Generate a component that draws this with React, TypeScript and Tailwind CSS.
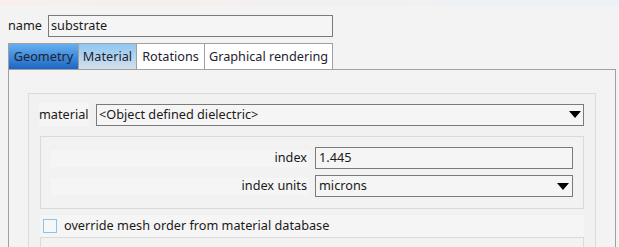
import React from "react";

function Arrow() {
  return (
    <svg width="12" height="7" viewBox="0 0 12 7" className="shrink-0">
      <polygon points="0,0 12,0 6,7" fill="#000" />
    </svg>
  );
}

function Tab({ label, kind, width }: { label: string; kind: "active" | "hover" | "plain"; width: string }) {
  const bg =
    kind === "active"
      ? "bg-gradient-to-b from-[#66b0f0] to-[#1b66c6]"
      : kind === "hover"
      ? "bg-gradient-to-b from-[#8ec6f2] to-[#d4dfea]"
      : "bg-white";
  return (
    <div
      className={`h-[27px] flex items-center justify-center border border-[#a0a0a0] -ml-px first:ml-0 text-[#1e2430] ${width} ${bg}`}
    >
      {label}
    </div>
  );
}

export default function App() {
  return (
    <div
      className="w-[619px] h-[247px] overflow-hidden bg-[#f3f3f3] text-[12.7px] text-[#1a1a1a]"
      style={{ fontFamily: '"Noto Sans", sans-serif' }}
    >
      <div className="h-[6px] bg-gradient-to-r from-[#f8efea] to-[#ebf2f7]" />

      {/* name row */}
      <div className="flex items-center mt-[9px] pl-[8px]">
        <span className="w-[40px]">name</span>
        <div className="w-[285px] h-[22px] border border-[#7a7a7a] bg-[#f5f5f5] flex items-center pl-[2px]">
          substrate
        </div>
      </div>

      {/* tabs */}
      <div className="flex mt-[6px] ml-[8px]">
        <Tab label="Geometry" kind="active" width="w-[71px]" />
        <Tab label="Material" kind="hover" width="w-[59px]" />
        <Tab label="Rotations" kind="plain" width="w-[69px]" />
        <Tab label="Graphical rendering" kind="plain" width="w-[129px]" />
      </div>

      {/* panel */}
      <div className="ml-[8px] w-[608px] h-[200px] -mt-px border border-[#a0a0a0] border-b-0 pt-[23px] px-[19px]">
        <div className="border border-[#dadada] bg-[#f1f1f1] h-[200px] pt-[9px] px-[10px]">
          <div className="flex items-center h-[23px]">
            <span className="w-[50px] h-[23px] flex items-center bg-[#f5f5f5]">material</span>
            <div className="ml-[7px] flex-1 h-[22px] border border-[#7a7a7a] bg-[#f5f5f5] flex items-center pl-[2px] pr-[2px] mr-px">
              <span className="flex-1">&lt;Object defined dielectric&gt;</span>
              <Arrow />
            </div>
          </div>

          <div className="mt-[10px] mx-[1px] border border-[#dadada] bg-[#f2f2f2] pt-[10px] pb-[11px] px-[10px] flex flex-col gap-[6px]">
            <div className="flex items-center">
              <span className="w-[258px] h-[17px] flex items-center justify-end pr-[2px] bg-[#f5f5f5]">index</span>
              <div className="ml-[6px] flex-1 h-[22px] border border-[#7a7a7a] bg-[#f5f5f5] flex items-center pl-[3px]">
                1.445
              </div>
            </div>
            <div className="flex items-center">
              <span className="w-[258px] h-[17px] flex items-center justify-end pr-[2px] bg-[#f5f5f5]">index units</span>
              <div className="ml-[6px] flex-1 h-[22px] border border-[#7a7a7a] bg-[#f5f5f5] flex items-center pl-[3px] pr-[3px]">
                <span className="flex-1">microns</span>
                <Arrow />
              </div>
            </div>
          </div>

          <div className="mt-[6px] mx-[1px] h-[22px] bg-[#f5f5f5] flex items-center pl-[3px]">
            <div className="w-[14px] h-[14px] border border-[#88c4f0] bg-[#f7f7f7]" />
            <span className="ml-[7px]">override mesh order from material database</span>
          </div>

          <div className="mx-[1px] h-[40px] border border-[#dadada] bg-[#f2f2f2]" />
        </div>
      </div>
    </div>
  );
}
